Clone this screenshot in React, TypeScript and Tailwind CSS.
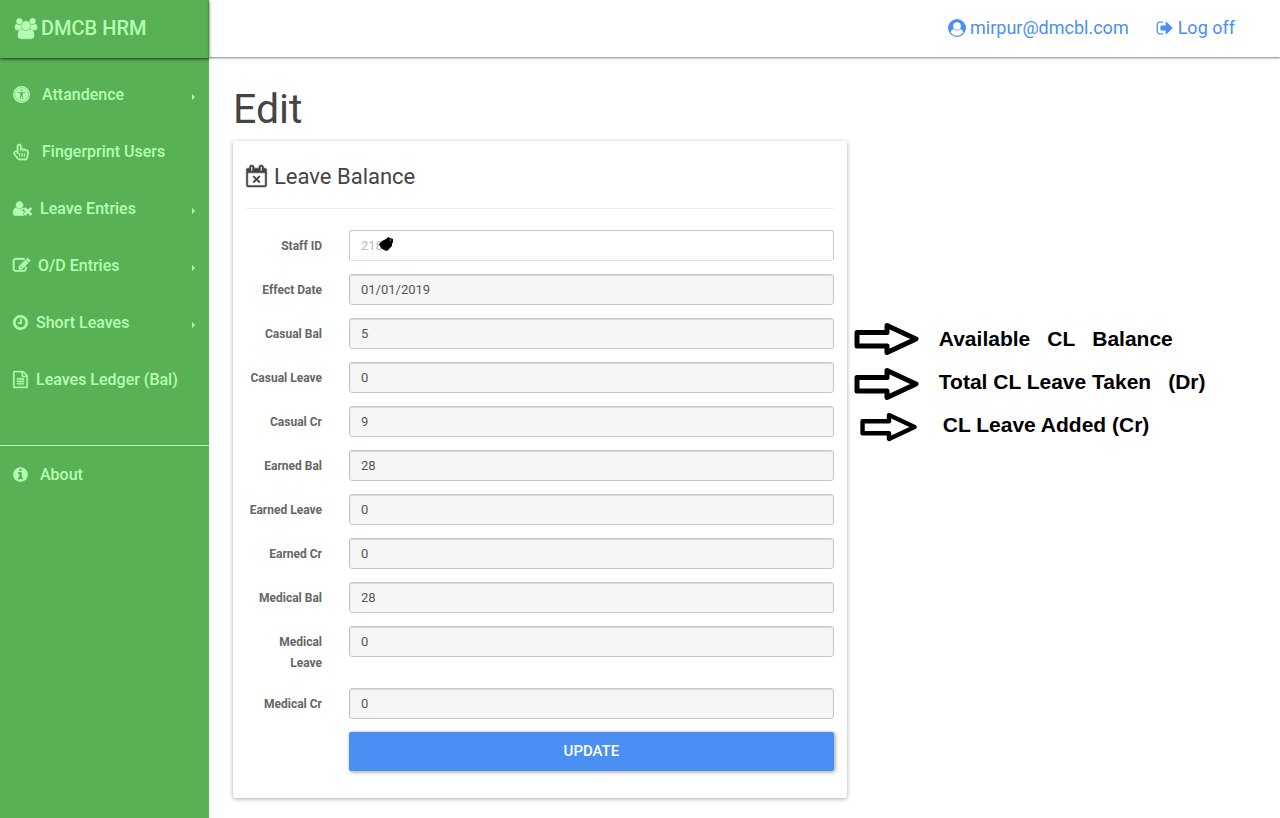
import React from "react";

type IconProps = { d: string; width?: number; className?: string; weight?: number };

/* Glyphs are drawn on a 1792-unit em grid; weight thickens the outline. */
function Icon({ d, width = 1792, className = "", weight = 0 }: IconProps) {
  return (
    <svg
      viewBox={`0 0 ${width} 1792`}
      fill="currentColor"
      stroke="currentColor"
      strokeWidth={weight}
      aria-hidden="true"
      className={`shrink-0 overflow-visible ${className}`}
    >
      <path d={d} fillRule="evenodd" />
    </svg>
  );
}

const paths = {
  users:
    "M593 896q-162 5-265 128h-134q-82 0-138-40.5t-56-118.5q0-353 124-353 6 0 43.5 21t97.5 42.5 119 21.5q67 0 133-23-5 37-5 66 0 139 81 256zm1071 637q0 120-73 189.5t-194 69.5h-874q-121 0-194-69.5t-73-189.5q0-53 3.5-103.5t14-109 26.5-108.5 43-97.5 62-81 85.5-53.5 111.5-20q10 0 43 21.5t73 48 107 48 135 21.5 135-21.5 107-48 73-48 43-21.5q61 0 111.5 20t85.5 53.5 62 81 43 97.5 26.5 108.5 14 109 3.5 103.5zm-1024-1277q0 106-75 181t-181 75-181-75-75-181 75-181 181-75 181 75 75 181zm704 384q0 159-112.5 271.5t-271.5 112.5-271.5-112.5-112.5-271.5 112.5-271.5 271.5-112.5 271.5 112.5 112.5 271.5zm576 225q0 78-56 118.5t-138 40.5h-134q-103-123-265-128 81-117 81-256 0-29-5-66 66 23 133 23 59 0 119-21.5t97.5-42.5 43.5-21q124 0 124 353zm-128-609q0 106-75 181t-181 75-181-75-75-181 75-181 181-75 181 75 75 181z",
  pointer:
    "M704 128q-53 0-90.5 37.5t-37.5 90.5v896l-151-202q-41-54-107-54-52 0-89 38t-37 90q0 43 26 77l384 512q38 51 102 51h718q22 0 39.5-13.5t22.5-34.5l92-368q24-96 24-194v-217q0-41-28-71t-68-30-68 28-28 68h-32v-61q0-48-32-81.5t-80-33.5q-46 0-79 33t-33 79v64h-32v-90q0-55-37-94.5t-91-39.5q-53 0-90.5 37.5t-37.5 90.5v96h-32v-570q0-55-37-94.5t-91-39.5zm0-128q107 0 181.5 77.5t74.5 185.5v220q22-2 32-2 99 0 173 69 47-21 99-21 113 0 184 87 27-7 56-7 94 0 159 67.5t65 161.5v217q0 116-28 225l-92 368q-16 64-68 104.5t-118 40.5h-718q-60 0-114.5-27.5t-90.5-74.5l-384-512q-51-68-51-154 0-105 74.5-180.5t179.5-75.5q71 0 130 35v-547q0-106 75-181t181-75zm64 1408v-384h-32v384h32zm256 0v-384h-32v384h32zm256 0v-384h-32v384h32z",
  userTimes:
    "M704 896q-159 0-271.5-112.5t-112.5-271.5 112.5-271.5 271.5-112.5 271.5 112.5 112.5 271.5-112.5 271.5-271.5 112.5zm1077 320l249 249q9 9 9 23 0 13-9 22l-136 136q-9 9-22 9-14 0-23-9l-249-249-249 249q-9 9-23 9-13 0-22-9l-136-136q-9-9-9-22 0-14 9-23l249-249-249-249q-9-9-9-23 0-13 9-22l136-136q9-9 22-9 14 0 23 9l249 249 249-249q9-9 23-9 13 0 22 9l136 136q9 9 9 22 0 14-9 23zm-498 0l-181 181q-37 37-37 91 0 53 37 90l83 83q-21 3-44 3h-874q-121 0-194-69t-73-190q0-53 3.5-103.5t14-109 26.5-108.5 43-97.5 62-81 85.5-53.5 111.5-20q19 0 39 17 79 61 154.5 91.5t164.5 30.5 164.5-30.5 154.5-91.5q20-17 39-17 132 0 217 96h-90q-54 0-91 37l-83 83q-37 37-37 90 0 54 37 91z",
  edit:
    "M888 1184l116-116-152-152-116 116v56h96v96h56zm440-720q-16-16-33 1l-350 350q-17 17-1 33t33-1l350-350q17-17 1-33zm80 594v190q0 119-84.5 203.5t-203.5 84.5h-832q-119 0-203.5-84.5t-84.5-203.5v-832q0-119 84.5-203.5t203.5-84.5h832q63 0 117 25 15 7 18 23 3 17-9 29l-49 49q-14 14-32 8-23-6-45-6h-832q-66 0-113 47t-47 113v832q0 66 47 113t113 47h832q66 0 113-47t47-113v-126q0-13 9-22l64-64q15-15 35-7t20 29zm-96-738l288 288-672 672h-288v-288zm444 132l-92 92-288-288 92-92q28-28 68-28t68 28l152 152q28 28 28 68t-28 68z",
  clock:
    "M896 544v448q0 14-9 23t-23 9h-320q-14 0-23-9t-9-23v-64q0-14 9-23t23-9h224v-352q0-14 9-23t23-9h64q14 0 23 9t9 23zm416 352q0-148-73-273t-198-198-273-73-273 73-198 198-73 273 73 273 198 198 273 73 273-73 198-198 73-273zm224 0q0 209-103 385.5t-279.5 279.5-385.5 103-385.5-103-279.5-279.5-103-385.5 103-385.5 279.5-279.5 385.5-103 385.5 103 279.5 279.5 103 385.5z",
  file:
    "M1468 380q28 28 48 76t20 88v1152q0 40-28 68t-68 28h-1344q-40 0-68-28t-28-68v-1600q0-40 28-68t68-28h896q40 0 88 20t76 48zm-444-244v376h376q-10-29-22-41l-313-313q-12-12-41-22zm384 1528v-1024h-416q-40 0-68-28t-28-68v-416h-768v1536h1280zm-1024-864q0-14 9-23t23-9h704q14 0 23 9t9 23v64q0 14-9 23t-23 9h-704q-14 0-23-9t-9-23v-64zm736 224q14 0 23 9t9 23v64q0 14-9 23t-23 9h-704q-14 0-23-9t-9-23v-64q0-14 9-23t23-9h704zm0 256q14 0 23 9t9 23v64q0 14-9 23t-23 9h-704q-14 0-23-9t-9-23v-64q0-14 9-23t23-9h704z",
  info:
    "M1024 1376v-160q0-14-9-23t-23-9h-96v-512q0-14-9-23t-23-9h-320q-14 0-23 9t-9 23v160q0 14 9 23t23 9h96v320h-96q-14 0-23 9t-9 23v160q0 14 9 23t23 9h448q14 0 23-9t9-23zm-128-896v-160q0-14-9-23t-23-9h-192q-14 0-23 9t-9 23v160q0 14 9 23t23 9h192q14 0 23-9t9-23zm640 416q0 209-103 385.5t-279.5 279.5-385.5 103-385.5-103-279.5-279.5-103-385.5 103-385.5 279.5-279.5 385.5-103 385.5 103 279.5 279.5 103 385.5z",
  calendar:
    "M1111 1399l-46 46q-9 9-22 9t-23-9l-188-189-188 189q-10 9-23 9t-22-9l-46-46q-9-9-9-22t9-23l189-188-189-188q-9-10-9-23t9-22l46-46q9-9 22-9t23 9l188 188 188-188q10-9 23-9t22 9l46 46q9 9 9 22t-9 23l-188 188 188 188q9 10 9 23t-9 22zm-983 265h1408v-1024h-1408v1024zm384-1216v-288q0-14-9-23t-23-9h-64q-14 0-23 9t-9 23v288q0 14 9 23t23 9h64q14 0 23-9t9-23zm768 0v-288q0-14-9-23t-23-9h-64q-14 0-23 9t-9 23v288q0 14 9 23t23 9h64q14 0 23-9t9-23zm384-64v1280q0 52-38 90t-90 38h-1408q-52 0-90-38t-38-90v-1280q0-52 38-90t90-38h128v-96q0-66 47-113t113-47h64q66 0 113 47t47 113v96h384v-96q0-66 47-113t113-47h64q66 0 113 47t47 113v96h128q52 0 90 38t38 90z",
  signOut:
    "M640 1440q0 4 1 20t.5 26.5-3 23.5-10 19.5-20.5 6.5h-320q-119 0-203.5-84.5t-84.5-203.5v-704q0-119 84.5-203.5t203.5-84.5h320q13 0 22.5 9.5t9.5 22.5q0 4 1 20t.5 26.5-3 23.5-10 19.5-20.5 6.5h-320q-66 0-113 47t-47 113v704q0 66 47 113t113 47h312l11.5 1 11.5 3 8 5.5 7 9 2 13.5zm928-544q0 26-19 45l-544 544q-19 19-45 19t-45-19-19-45v-288h-448q-26 0-45-19t-19-45v-384q0-26 19-45t45-19h448v-288q0-26 19-45t45-19 45 19l544 544q19 19 19 45z",
  userCircle:
    "M896 0a896 896 0 1 1 0 1792a896 896 0 1 1 0-1792zM1515 1351q-66-327-306-327-131 128-313 128t-313-128q-240 0-306 327A768 768 0 0 0 1515 1351zM896 320a384 384 0 1 0 0 768a384 384 0 1 0 0-768z",
};

function AccessIcon() {
  return (
    <svg viewBox="0 0 17 17" aria-hidden="true" className="size-[17px] shrink-0">
      <circle cx="8.5" cy="8.5" r="7.7" fill="currentColor" stroke="currentColor" strokeWidth="1.4" />
      <circle cx="8.5" cy="8.5" r="6.9" fill="none" stroke="#58b154" strokeWidth="0.5" />
      <g fill="none" stroke="#58b154" strokeLinecap="round" strokeLinejoin="round">
        <circle cx="8.5" cy="4.3" r="0.6" fill="#58b154" strokeWidth="0.7" />
        <path d="M5 6.300l2.600.6h1.800l2.600-.6M7.800 7v2.400l-.8 3.400M9.200 7v2.400l.8 3.400" strokeWidth="0.9" />
        <path d="M8.500 7v2.700" strokeWidth="1.400" />
      </g>
    </svg>
  );
}

type NavItem = { label: string; icon: React.ReactNode; gap: string; sub?: boolean };

const nav: NavItem[] = [
  { label: "Attandence", icon: <AccessIcon />, gap: "gap-3", sub: true },
  { label: "Fingerprint Users", icon: <Icon d={paths.pointer} weight={70} className="size-4" />, gap: "gap-[13px]" },
  { label: "Leave Entries", icon: <Icon d={paths.userTimes} weight={40} width={2048} className="h-[17px] w-[19px]" />, gap: "gap-2", sub: true },
  { label: "O/D Entries", icon: <Icon d={paths.edit} weight={70} className="size-[17px]" />, gap: "gap-2", sub: true },
  { label: "Short Leaves", icon: <Icon d={paths.clock} weight={60} width={1536} className="h-[17px] w-[15px]" />, gap: "gap-2", sub: true },
  { label: "Leaves Ledger (Bal)", icon: <Icon d={paths.file} weight={40} width={1536} className="h-[17px] w-[15px]" />, gap: "gap-2" },
];

function NavLink({ item }: { item: NavItem }) {
  return (
    <a href="#" className={`flex h-[57px] items-center pr-[13px] pl-[13px] text-base font-medium ${item.gap}`}>
      {item.icon}
      <span className="whitespace-nowrap">{item.label}</span>
      {item.sub && (
        <svg viewBox="0 0 4 6" fill="currentColor" aria-hidden="true" className="mt-1 ml-auto h-1.5 w-1">
          <path d="M0 0l3 3-3 3z" />
        </svg>
      )}
    </a>
  );
}

const fields = [
  { id: "effect-date", label: "Effect Date", value: "01/01/2019" },
  { id: "casual-bal", label: "Casual Bal", value: "5" },
  { id: "casual-leave", label: "Casual Leave", value: "0" },
  { id: "casual-cr", label: "Casual Cr", value: "9" },
  { id: "earned-bal", label: "Earned Bal", value: "28" },
  { id: "earned-leave", label: "Earned Leave", value: "0" },
  { id: "earned-cr", label: "Earned Cr", value: "0" },
  { id: "medical-bal", label: "Medical Bal", value: "28" },
  { id: "medical-leave", label: "Medical Leave", value: "0" },
  { id: "medical-cr", label: "Medical Cr", value: "0" },
];

const rowClass = "grid grid-cols-[76px_1fr] items-start gap-x-[27px]";
const labelClass = "pt-1.5 pb-px text-right text-xs leading-[21px] font-bold text-[#666]";
const inputClass = "block h-[31px] w-full rounded-[3px] border border-[#c6c6c6] px-[11px] text-[13px] outline-none";

function Arrow({ className }: { className: string }) {
  return (
    <svg viewBox="0 0 66 34" aria-hidden="true" className={`shrink-0 ${className}`}>
      <path d="M3 10.500h30V3.500L62 17 33 30.500V24H3z" fill="none" stroke="#000" strokeWidth="5" strokeLinejoin="round" />
    </svg>
  );
}

export default function App() {
  return (
    <div className="flex min-h-screen bg-white font-['Roboto',sans-serif] text-[#444]">
      <aside className="w-[209px] shrink-0 bg-[#58b154] text-[#b5ffb5]">
        <a href="#" className="flex h-[58px] items-center gap-1 pb-0.5 pl-[15px] text-xl font-medium shadow-[0_1px_3px_rgba(0,0,0,0.7)]">
          <Icon d={paths.users} weight={40} width={1920} className="h-[21px] w-[22px]" />
          DMCB HRM
        </a>
        <nav className="pt-2">
          {nav.map((item) => (
            <NavLink key={item.label} item={item} />
          ))}
          <div className="mt-[37px] border-t border-[#b5ffb5]">
            <NavLink item={{ label: "About", icon: <Icon d={paths.info} width={1536} className="h-[17px] w-[15px]" />, gap: "gap-3" }} />
          </div>
        </nav>
      </aside>

      <div className="min-w-0 flex-1">
        <header className="flex h-[57px] items-center justify-end gap-[27px] pr-[45px] pb-0.5 text-lg text-[#4990f2] shadow-[0_1px_2px_rgba(0,0,0,0.5)]">
          <a href="#" className="flex items-center gap-1">
            <Icon d={paths.userCircle} className="size-[18px]" />
            mirpur@dmcbl.com
          </a>
          <a href="#" className="flex items-center gap-1">
            <Icon d={paths.signOut} width={1664} className="size-[18px]" />
            Log off
          </a>
        </header>

        <main className="px-6 pt-[27px] pb-5">
          <h1 className="text-[41px] leading-[50px]">Edit</h1>
          <div className="mt-[7px] flex items-start">
            <section className="w-3/5 rounded-[3px] px-[13px] pt-[15px] pb-[27px] shadow-[0_1px_4px_rgba(0,0,0,0.35)]">
              <h2 className="flex h-[53px] items-start gap-[7px] border-b border-[#eee] pt-1.5 text-[22px] leading-[30px]">
                <Icon d={paths.calendar} weight={40} width={1664} className="mt-[3px] h-[22px] w-[21px]" />
                Leave Balance
              </h2>
              <form className="mt-[21px] grid gap-y-[13px]" onSubmit={(e) => e.preventDefault()}>
                <div className={rowClass}>
                  <label htmlFor="staff-id" className={labelClass}>
                    Staff ID
                  </label>
                  <div className="relative">
                    <input
                      id="staff-id"
                      readOnly
                      defaultValue="218"
                      className={`${inputClass} [border-bottom-style:dotted] bg-white text-[#bbb]`}
                    />
                    <svg viewBox="0 0 14 14" aria-hidden="true" className="absolute top-[7px] left-[30px] size-3.5">
                      <path d="M0 7l3-3 2-1 2-1 2-2 2 1 3 1v3l-1 2 0 2-2 2-3 3-3-1-3-2z" fill="#000" />
                      <path d="M11 3h1" stroke="#fff" />
                    </svg>
                  </div>
                </div>
                {fields.map((f) => (
                  <div key={f.id} className={rowClass}>
                    <label htmlFor={f.id} className={labelClass}>
                      {f.label}
                    </label>
                    <input
                      id={f.id}
                      defaultValue={f.value}
                      className={`${inputClass} bg-[#f6f6f6] text-[#555] shadow-[inset_0_1px_1px_rgba(0,0,0,0.12)]`}
                    />
                  </div>
                ))}
                <div className={rowClass}>
                  <button
                    type="submit"
                    className="col-start-2 h-[39px] rounded-[2px] bg-[#4990f2] text-[15px] font-medium text-white shadow-[1px_1px_4px_rgba(0,0,0,0.4)]"
                  >
                    UPDATE
                  </button>
                </div>
              </form>
            </section>

            <aside className="flex shrink-0 pt-[181px] pl-[7px] font-['Liberation_Sans',sans-serif] text-[21px] leading-[26px] font-bold whitespace-nowrap text-black">
              <div className="flex flex-col gap-[11px]">
                <Arrow className="h-[34px] w-[66px]" />
                <Arrow className="h-[34px] w-[66px]" />
                <Arrow className="h-[30px] w-[62px] self-end" />
              </div>
              <div className="flex flex-col gap-[17px] pt-1 pl-[19px]">
                <p className="flex gap-[17px]">
                  <span>Available</span>
                  <span>CL</span>
                  <span>Balance</span>
                </p>
                <p className="flex gap-[17px]">
                  <span>Total CL Leave Taken</span>
                  <span>(Dr)</span>
                </p>
                <p className="pl-1">CL Leave Added (Cr)</p>
              </div>
            </aside>
          </div>
        </main>
      </div>
    </div>
  );
}
